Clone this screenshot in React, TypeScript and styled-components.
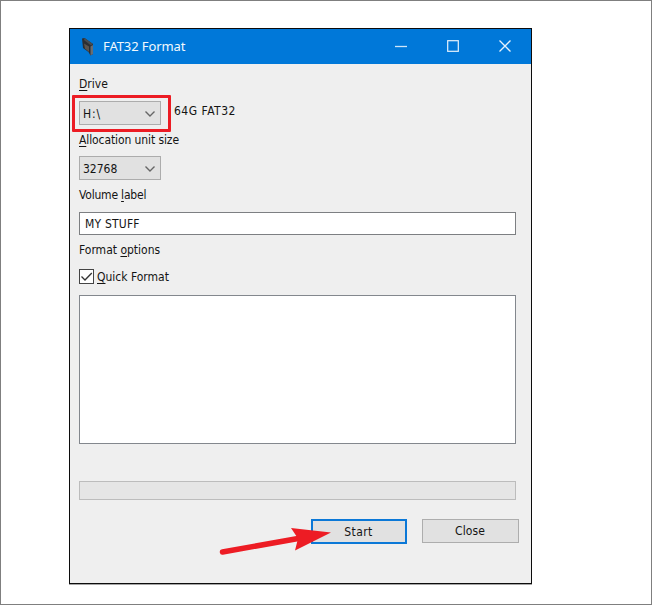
import React from "react";
import styled, { createGlobalStyle } from "styled-components";

const GlobalStyle = createGlobalStyle`
  * { box-sizing: border-box; }
  body { margin: 0; background: #fff; overflow: hidden; }
`;

const Page = styled.main`
  width: 652px;
  height: 605px;
  padding: 27px 0 0 68px;
  border: 1px solid #7f7f7f;
  background: #fff;
  font-family: "DejaVu Sans Condensed", "DejaVu Sans", sans-serif;
  font-stretch: condensed;
  font-size: 12px;
  color: #141414;
`;

const Window = styled.section`
  position: relative;
  width: 463px;
  height: 556px;
  border: 1px solid #0c0c0c;
  box-shadow: 0 1px 0 #a5a5a5;
  background: #efefef;
`;

const TitleBar = styled.header`
  display: flex;
  align-items: center;
  height: 35px;
  padding-left: 10px;
  background: #0078d9;
  color: #f2f8fd;
`;

const Title = styled.h1`
  flex: 1;
  margin: -2px 0 0 9px;
  font: 400 13px/20px "Noto Sans", sans-serif;
  letter-spacing: -0.1px;
`;

const Caption = styled.span`
  display: flex;
  justify-content: center;
  width: 52px;
  margin-top: -2px;
`;

const Body = styled.div`
  display: flex;
  flex-direction: column;
  padding: 11px 15px 0 9px;
`;

const Label = styled.label<{ $top?: number; $spacing?: number }>`
  height: 18px;
  margin-top: ${(p) => p.$top ?? 0}px;
  line-height: 18px;
  letter-spacing: ${(p) => p.$spacing ?? 0}px;
  white-space: nowrap;
`;

const Mnemonic = styled.span`
  text-decoration: underline;
  text-underline-offset: 1.5px;
  text-decoration-thickness: 1px;
  text-decoration-skip-ink: none;
`;

const DriveRow = styled.div`
  display: flex;
  align-items: center;
  gap: 13px;
  height: 24px;
  margin-top: 8px;
`;

const Highlighted = styled.div`
  position: relative;
  &::after {
    content: "";
    position: absolute;
    inset: -6px -10px -7px -7px;
    border: 3px solid #ec1c24;
    border-radius: 1px;
  }
`;

const Select = styled.div<{ $top?: number; $spacing?: number }>`
  display: flex;
  align-items: center;
  justify-content: space-between;
  width: 82px;
  height: 24px;
  margin-top: ${(p) => p.$top ?? 0}px;
  padding: 1px 4px 0 3px;
  border: 1px solid #acacac;
  background: #e1e1e1;
  letter-spacing: ${(p) => p.$spacing ?? 0}px;
`;

const DriveInfo = styled.span`
  margin-top: -5px;
  letter-spacing: 0.5px;
`;

const TextField = styled.div`
  height: 23px;
  margin-top: 8px;
  padding-left: 5px;
  border: 1px solid #7d7f82;
  background: #fff;
  line-height: 22px;
  letter-spacing: 0.2px;
`;

const CheckRow = styled.div`
  display: flex;
  align-items: center;
  gap: 3px;
  height: 15px;
  margin-top: 10px;
`;

const CheckBox = styled.span`
  display: flex;
  width: 15px;
  height: 15px;
  border: 1px solid #444;
  background: #fff;
`;

const Log = styled.div`
  height: 149px;
  margin-top: 11px;
  border: 1px solid #83878d;
  background: #fff;
`;

const Progress = styled.div`
  height: 19px;
  margin-top: 37px;
  border: 1px solid #bcbcbc;
  background: #e5e5e5;
`;

const Actions = styled.footer`
  display: flex;
  justify-content: flex-end;
  gap: 15px;
  margin: 19px -3px 0 0;
`;

const Button = styled.button<{ $primary?: boolean }>`
  width: ${(p) => (p.$primary ? 96 : 97)}px;
  height: ${(p) => (p.$primary ? 25 : 24)}px;
  padding: 0 1px 0 0;
  border: ${(p) => (p.$primary ? "2px solid #0b78d7" : "1px solid #adadad")};
  background: #e1e1e1;
  color: inherit;
  font: inherit;
  letter-spacing: ${(p) => (p.$primary ? 0.4 : 0.1)}px;
`;

const Arrow = styled.svg`
  position: absolute;
  left: 148px;
  top: 496px;
`;

const Chevron = () => (
  <svg width="12" height="8" viewBox="0 0 12 8" fill="none" stroke="#666" strokeWidth="1.4">
    <path d="M1.5 1.5 6 6 10.500 1.5" />
  </svg>
);

const AppIcon = () => (
  <svg width="14" height="20" viewBox="0 0 14 20">
    <path d="M2 1.500 4.500 1 13 7 13 17 10.500 18.500 8.500 15 3 11Z" fill="#2b2e33" />
    <path d="M4 6.500 9 9.500 9 15 5 11.500Z" fill="#5a544f" />
    <path d="M4.500 1 13 7 11 8.500 4 3Z" fill="#474b50" />
    <path d="M10.500 9.500 13 8 13 17 10.500 18.500Z" fill="#686d73" />
  </svg>
);

export default function App() {
  return (
    <Page>
      <GlobalStyle />
      <Window>
        <TitleBar>
          <AppIcon />
          <Title>FAT32 Format</Title>
          <Caption>
            <svg width="12" height="12" stroke="#cfe6fa" strokeWidth="1.3">
              <path d="M0 6.500H12" />
            </svg>
          </Caption>
          <Caption>
            <svg width="12" height="12" fill="none" stroke="#e6f2fc" strokeWidth="1.2">
              <rect x="0.700" y="0.700" width="10.600" height="10.600" />
            </svg>
          </Caption>
          <Caption>
            <svg width="12" height="12" stroke="#e6f2fc" strokeWidth="1.300">
              <path d="M.5.5 11.500 11.500M11.500.5.5 11.500" />
            </svg>
          </Caption>
        </TitleBar>
        <Body>
          <Label><Mnemonic>D</Mnemonic>rive</Label>
          <DriveRow>
            <Highlighted>
              <Select $spacing={0.9}>H:\ <Chevron /></Select>
            </Highlighted>
            <DriveInfo>64G FAT32</DriveInfo>
          </DriveRow>
          <Label $top={6} $spacing={-0.1}><Mnemonic>A</Mnemonic>llocation unit size</Label>
          <Select $top={7}>32768 <Chevron /></Select>
          <Label $top={6} $spacing={-0.2}>Volume <Mnemonic>l</Mnemonic>abel</Label>
          <TextField>MY STUFF</TextField>
          <Label $top={6}>Format <Mnemonic>o</Mnemonic>ptions</Label>
          <CheckRow>
            <CheckBox>
              <svg width="13" height="13" fill="none" stroke="#333" strokeWidth="1.3">
                <path d="M1.500 6.500 5 10 11.800 3" />
              </svg>
            </CheckBox>
            <Label><Mnemonic>Q</Mnemonic>uick Format</Label>
          </CheckRow>
          <Log />
          <Progress />
          <Actions>
            <Button $primary>Start</Button>
            <Button>Close</Button>
          </Actions>
        </Body>
        <Arrow width="115" height="36" viewBox="0 0 115 36">
          <path d="M4.500 27 83 13" stroke="#ed1c24" strokeWidth="5.500" strokeLinecap="round" />
          <path d="M73 3 113 7.500 77 25.500 80 13.500Z" fill="#ed1c24" />
        </Arrow>
      </Window>
    </Page>
  );
}
